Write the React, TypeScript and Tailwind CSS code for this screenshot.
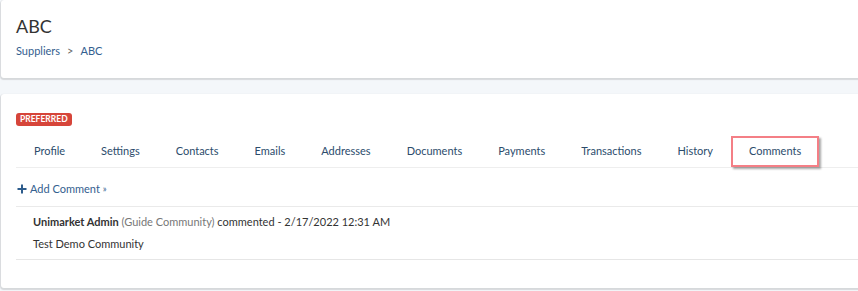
import React from 'react';

const TABS = [
  'Profile',
  'Settings',
  'Contacts',
  'Emails',
  'Addresses',
  'Documents',
  'Payments',
  'Transactions',
  'History',
  'Comments',
];

export default function App() {
  return (
    <div
      className="min-h-[291px] bg-[#f4f7fa] pl-px text-[11px] text-[#333]"
      style={{ fontFamily: 'Lato, "Open Sans", sans-serif' }}
    >
      <div className="h-[78px] rounded-l-[3px] bg-white px-[15px] pt-[13px] shadow-[0_1px_1px_1px_rgba(0,0,0,0.12)]">
        <h1 className="text-[18px] leading-[26px] text-[#333]">ABC</h1>
        <div className="mt-[4px] flex items-center text-[11px] text-[#34608f]">
          <span>Suppliers</span>
          <span className="mx-[7px] text-[#666]">&gt;</span>
          <span>ABC</span>
        </div>
      </div>

      <div className="mt-[16px] h-[194px] rounded-l-[3px] bg-white pl-[15px] pt-[19px] shadow-[0_1px_1px_1px_rgba(0,0,0,0.12)]">
        <div className="flex">
          <span className="flex h-[13px] items-center rounded-[3px] bg-[#d6453a] px-[4px] text-[8.5px] font-bold leading-none text-white">
            PREFERRED
          </span>
        </div>

        <div className="mt-[10px] flex border-b border-[#eee]">
          {TABS.map((tab) =>
            tab === 'Comments' ? (
              <div
                key={tab}
                className="flex h-[31px] items-center border-2 border-[#f47f86] px-[16px] text-[#2c4c6c] shadow-[2px_2px_2px_rgba(0,0,0,0.35)]"
              >
                {tab}
              </div>
            ) : (
              <div key={tab} className="flex h-[31px] items-center px-[18px] text-[#2c4c6c]">
                {tab}
              </div>
            )
          )}
        </div>

        <div className="flex h-[39px] items-center border-b border-[#eaeaea] pl-px pt-[4px] text-[#34608f]">
          <svg width="10" height="10" viewBox="0 0 10 10" className="mr-[3px]">
            <path d="M5 0.5v9M0.5 5h9" stroke="#2d5c8c" strokeWidth="2" />
          </svg>
          <span>Add Comment</span>
          <span className="ml-[3px] text-[9px]">»</span>
        </div>

        <div className="border-b border-[#e6e6e6] pl-[17px] pt-[8px] pb-[8px]">
          <div className="leading-[14px]">
            <span className="font-bold">Unimarket Admin</span>{' '}
            <span className="text-[#777]">(Guide Community)</span> commented - 2/17/2022 12:31 AM
          </div>
          <div className="mt-[8px] leading-[14px]">Test Demo Community</div>
        </div>
      </div>
    </div>
  );
}
